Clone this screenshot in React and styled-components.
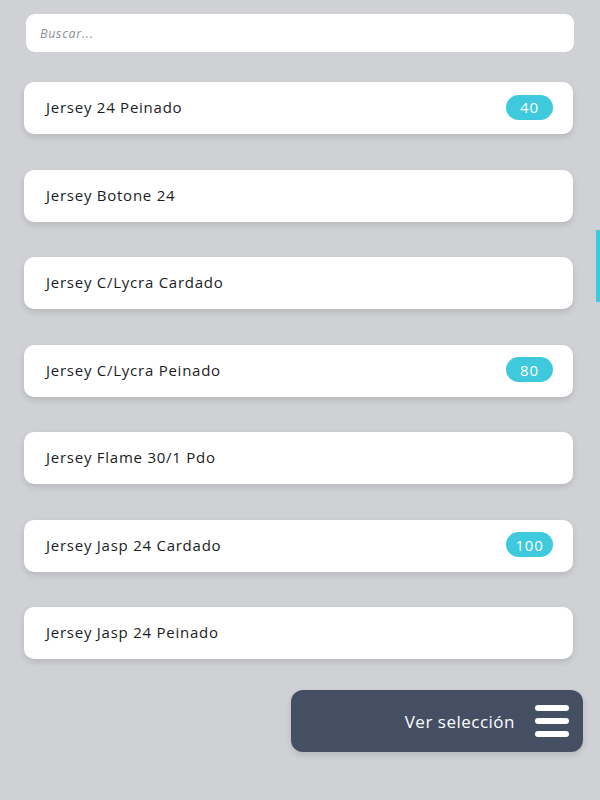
import styled, { createGlobalStyle } from "styled-components";

const Global = createGlobalStyle`
  html, body {
    margin: 0;
    background: #d0d1d5;
    font-family: "Open Sans", "Noto Sans", sans-serif;
  }
`;

const Page = styled.div`
  width: 600px;
  height: 800px;
  display: flex;
  flex-direction: column;
  background: #d0d1d5;
  overflow: hidden;
`;

const SearchWrap = styled.div`
  padding: 14px 26px 0 26px;
`;

const Search = styled.input`
  box-sizing: border-box;
  width: 100%;
  height: 38px;
  border: none;
  border-radius: 9px;
  background: #fff;
  padding: 0 14px;
  font-family: "Open Sans", sans-serif;
  font-size: 12.5px;
  font-style: italic;
  letter-spacing: 0.7px;
  outline: none;
  &::placeholder {
    color: #8c8e94;
  }
`;

const ListArea = styled.div`
  position: relative;
  height: 600px;
  margin-top: 14px;
  overflow: hidden;
`;

const List = styled.div`
  display: flex;
  flex-direction: column;
  gap: 35.5px;
  padding: 16px 27px 20px 24px;
`;

const Card = styled.div`
  height: 52px;
  border-radius: 10px;
  background: #fff;
  box-shadow: 0 3px 6px rgba(0, 0, 0, 0.12);
  display: flex;
  align-items: center;
  justify-content: space-between;
  padding: 0 20px 0 22px;
`;

const Name = styled.span`
  font-size: 15px;
  color: #1a1c22;
  letter-spacing: 0.75px;
  margin-top: -2px;
`;

const Badge = styled.span`
  width: 47px;
  height: 25px;
  box-sizing: border-box;
  border-radius: 13px;
  background: #3ec9dd;
  color: #fff;
  font-size: 15px;
  letter-spacing: 0.8px;
  display: flex;
  align-items: center;
  justify-content: center;
  margin-top: -2px;
`;

const Thumb = styled.div`
  position: absolute;
  right: 0;
  top: 164px;
  width: 4px;
  height: 72px;
  background: #3ec9dd;
`;

const Footer = styled.div`
  display: flex;
  justify-content: flex-end;
  padding: 24px 17px 0 0;
`;

const Button = styled.button`
  width: 292px;
  height: 62px;
  border: none;
  border-radius: 12px;
  background: #454f63;
  box-shadow: 0 3px 6px rgba(0, 0, 0, 0.12);
  display: flex;
  align-items: center;
  justify-content: flex-end;
  gap: 20px;
  padding: 0 14px 0 0;
  color: #fff;
  font-family: "Open Sans", "Noto Sans", sans-serif;
  font-size: 17px;
  letter-spacing: 0.5px;
`;

const Burger = styled.span`
  display: flex;
  flex-direction: column;
  gap: 7px;
`;

const Bar = styled.span`
  width: 34px;
  height: 6px;
  border-radius: 3px;
  background: #fff;
`;

const items = [
  { name: "Jersey 24 Peinado", qty: 40 },
  { name: "Jersey Botone 24" },
  { name: "Jersey C/Lycra Cardado" },
  { name: "Jersey C/Lycra Peinado", qty: 80 },
  { name: "Jersey Flame 30/1 Pdo" },
  { name: "Jersey Jasp 24 Cardado", qty: 100 },
  { name: "Jersey Jasp 24 Peinado" },
];

export default function App() {
  return (
    <Page>
      <Global />
      <SearchWrap>
        <Search placeholder="Buscar..." />
      </SearchWrap>
      <ListArea>
        <List>
          {items.map((it) => (
            <Card key={it.name}>
              <Name>{it.name}</Name>
              {it.qty && <Badge>{it.qty}</Badge>}
            </Card>
          ))}
        </List>
        <Thumb />
      </ListArea>
      <Footer>
        <Button>
          Ver selección
          <Burger>
            <Bar />
            <Bar />
            <Bar />
          </Burger>
        </Button>
      </Footer>
    </Page>
  );
}
